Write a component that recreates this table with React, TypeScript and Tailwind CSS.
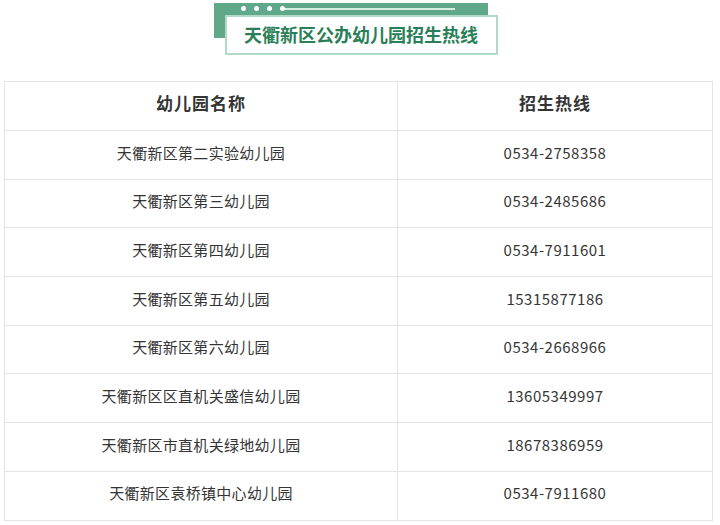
const rows: [string, string][] = [
  ["天衢新区第二实验幼儿园", "0534-2758358"],
  ["天衢新区第三幼儿园", "0534-2485686"],
  ["天衢新区第四幼儿园", "0534-7911601"],
  ["天衢新区第五幼儿园", "15315877186"],
  ["天衢新区第六幼儿园", "0534-2668966"],
  ["天衢新区区直机关盛信幼儿园", "13605349997"],
  ["天衢新区市直机关绿地幼儿园", "18678386959"],
  ["天衢新区袁桥镇中心幼儿园", "0534-7911680"],
]

const font = { fontFamily: '"Microsoft YaHei", "Noto Sans CJK SC", "Noto Sans", sans-serif' }

function TitleBadge() {
  return (
    <div className="flex justify-center pt-[15px] pl-[2px]">
      <div className="relative w-[273px] h-[40px]">
        {/* green backing card with dots */}
        <div className="absolute left-[-11px] top-[-12px] w-[274px] h-[35px] bg-[#5fa98a]">
          <div className="flex items-center pl-[27px] pt-[3px]">
            <span className="shrink-0 w-[5px] h-[5px] rounded-full bg-white" />
            <span className="shrink-0 ml-[8px] w-[5px] h-[5px] rounded-full bg-white" />
            <span className="shrink-0 ml-[8px] w-[5px] h-[5px] rounded-full bg-white" />
            <span className="shrink-0 ml-[8px] w-[5px] h-[5px] rounded-full bg-white" />
            <span className="shrink-0 w-[170px] h-[2px] bg-[#d7ece2]" />
          </div>
        </div>
        <div className="relative h-full flex items-center justify-center pb-[3px] bg-white border-2 border-[#b3d9c7]">
          <span className="text-[18px] font-bold text-[#2b7f58] leading-none" style={font}>
            天衢新区公办幼儿园招生热线
          </span>
        </div>
      </div>
    </div>
  )
}

export default function App() {
  return (
    <div className="w-[720px] h-[525px] bg-white overflow-hidden" style={font}>
      <TitleBadge />
      <table className="mt-[26px] ml-[4px] w-[709px] border-collapse text-[#353535]">
        <thead>
          <tr className="h-[49px]">
            <th className="w-[393px] pb-[6px] border border-[#e4e4e4] text-[17px] font-bold tracking-[1px]">幼儿园名称</th>
            <th className="pb-[6px] border border-[#e4e4e4] text-[17px] font-bold tracking-[1px]">招生热线</th>
          </tr>
        </thead>
        <tbody>
          {rows.map(([name, tel]) => (
            <tr key={name} className="h-[48.7px]">
              <td className="pb-[4px] border border-[#e4e4e4] text-center text-[15px] tracking-[0.3px]">{name}</td>
              <td className="pb-[4px] border border-[#e4e4e4] text-center text-[15px] tracking-[0.5px]">{tel}</td>
            </tr>
          ))}
        </tbody>
      </table>
    </div>
  )
}
